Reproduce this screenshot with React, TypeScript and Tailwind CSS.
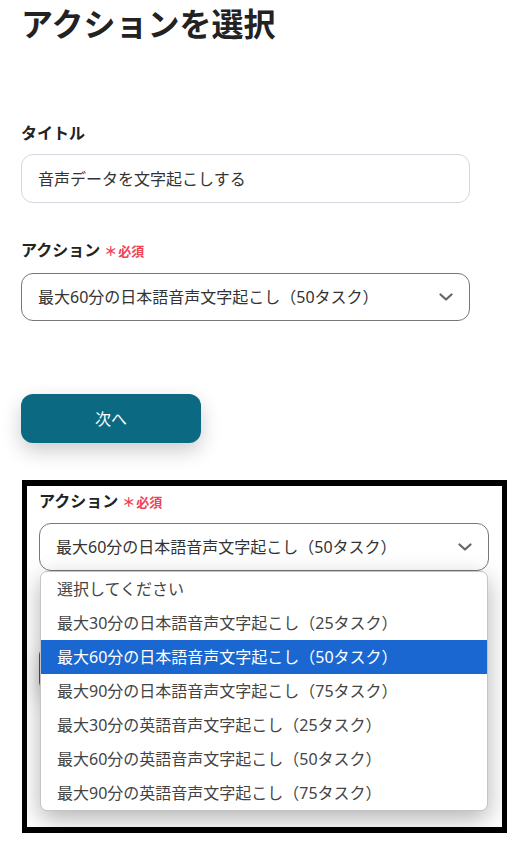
import type { ReactElement, ReactNode } from 'react';

const OPTIONS = [
  '選択してください',
  '最大30分の日本語音声文字起こし（25タスク）',
  '最大60分の日本語音声文字起こし（50タスク）',
  '最大90分の日本語音声文字起こし（75タスク）',
  '最大30分の英語音声文字起こし（25タスク）',
  '最大60分の英語音声文字起こし（50タスク）',
  '最大90分の英語音声文字起こし（75タスク）',
];
const SELECTED = 2;

function Chevron(): ReactElement {
  return (
    <svg width="14" height="8" viewBox="0 0 14 8" fill="none" stroke="#666" strokeWidth="2.2" strokeLinecap="round" strokeLinejoin="round">
      <path d="M1.5 1.5l5.5 5 5.5-5" />
    </svg>
  );
}

function FieldLabel({ children, required }: { children: ReactNode; required?: boolean }): ReactElement {
  return (
    <div className="flex items-baseline text-[16px] font-bold leading-6 text-[#222]">
      <span>{children}</span>
      {required && (
        <span className="ml-[4px] text-[13px] font-bold text-[#ef4158]">
          ＊<span className="ml-[1px]">必須</span>
        </span>
      )}
    </div>
  );
}

function ActionSelect(): ReactElement {
  return (
    <div className="flex h-[48px] items-center justify-between rounded-[12px] border border-[#777] bg-white pl-[16px] pr-[16px] text-[16px] text-[#333]">
      <span>{OPTIONS[SELECTED]}</span>
      <Chevron />
    </div>
  );
}

function NextButton({ label }: { label?: string }): ReactElement {
  return (
    <button
      type="button"
      className="flex h-[49px] w-[180px] items-center justify-center rounded-[12px] bg-[#0b6a82] text-[16px] text-white shadow-[0_8px_20px_rgba(0,0,0,0.2)]"
    >
      {label}
    </button>
  );
}

export default function App(): ReactElement {
  return (
    <div className="min-h-screen bg-white pb-[24px] font-['Noto_Sans','Noto_Sans_CJK_JP',sans-serif] text-[#222]">
      <div className="ml-[21px] w-[449px]">
        <h1 className="text-[32px] font-bold leading-[48px] text-[#222]">アクションを選択</h1>

        <div className="mt-[73px]">
          <div className="mb-[9px]">
            <FieldLabel>タイトル</FieldLabel>
          </div>
          <div className="flex h-[49px] items-center rounded-[12px] border border-[#d3d7de] px-[16px] text-[16px] text-[#333]">
            音声データを文字起こしする
          </div>
        </div>

        <div className="mt-[35px]">
          <div className="mb-[10px]">
            <FieldLabel required>アクション</FieldLabel>
          </div>
          <ActionSelect />
        </div>

        <div className="mt-[73px]">
          <NextButton label="次へ" />
        </div>
      </div>

      {/* screenshot of the open select */}
      <div className="ml-[22px] mt-[37px] h-[353px] w-[485px] overflow-hidden border-x-[5px] border-y-[6px] border-black bg-white pl-[12px] pt-[3px]">
        <div className="relative w-[450px]">
          <div className="mb-[9px]">
            <FieldLabel required>アクション</FieldLabel>
          </div>
          <ActionSelect />
          <div className="mt-[73px]">
            <NextButton />
          </div>

          <ul className="absolute left-[1px] right-[1px] top-[82px] overflow-hidden rounded-[7px] border border-[#c4c4c4] bg-white shadow-[0_8px_24px_rgba(0,0,0,0.3)]">
            {OPTIONS.map((opt, i) => (
              <li
                key={opt}
                className={
                  i === SELECTED
                    ? 'flex h-[34px] items-center bg-[#1a67d2] pl-[16px] text-[16px] text-white'
                    : 'flex h-[34px] items-center pl-[16px] text-[16px] text-[#444]'
                }
              >
                {opt}
              </li>
            ))}
          </ul>
        </div>
      </div>
    </div>
  );
}
